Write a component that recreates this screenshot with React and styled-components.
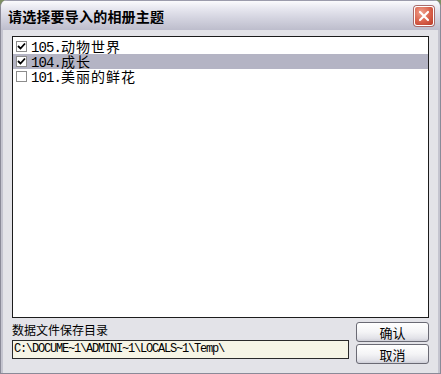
import React from "react";
import styled, { createGlobalStyle } from "styled-components";

const Global = createGlobalStyle`
  html, body { margin: 0; padding: 0; background: #7d8f63; }
  * { box-sizing: border-box; }
`;

const Window = styled.div`
  width: 441px;
  height: 374px;
  display: flex;
  flex-direction: column;
  background: #e3e3e8;
  border: 1px solid #8a8a98;
  border-top: none;
  border-radius: 7px 7px 0 0;
  overflow: hidden;
  font-family: "Noto Sans CJK SC", sans-serif;
`;

const TitleBar = styled.div`
  height: 30px;
  flex: none;
  display: flex;
  align-items: center;
  justify-content: space-between;
  padding: 0 6px 0 7px;
  background: linear-gradient(#fbfbfd 0%, #e8e8f0 25%, #d3d3df 60%, #bdbdcc 100%);
  border-top: 1px solid #9c9cac;
`;

const Title = styled.div`
  font-size: 14px;
  font-weight: 700;
  color: #000;
  letter-spacing: 0.2px;
`;

const Close = styled.div`
  width: 20px;
  height: 20px;
  border-radius: 3px;
  border: 1px solid #fff;
  background: radial-gradient(circle at 35% 30%, #f0a08c 0%, #d8604a 55%, #b83a28 100%);
  display: flex;
  align-items: center;
  justify-content: center;
  box-shadow: 0 0 0 1px #a86a6a;
`;

const Frame = styled.div`
  flex: 1;
  display: flex;
  flex-direction: column;
  padding: 6px 9px 9px 9px;
  border-left: 2px solid #c4c4cf;
  border-right: 2px solid #c4c4cf;
  border-bottom: 3px solid #c4c4cf;
`;

const ListBox = styled.div`
  height: 282px;
  flex: none;
  background: #fff;
  border: 1px solid #1c1c1c;
  padding: 2px 0 0 0;
`;

const Row = styled.div`
  height: 15px;
  display: flex;
  align-items: center;
  padding-left: 3px;
  background: ${(p) => (p.$selected ? "#b4b4c4" : "transparent")};
`;

const Box = styled.div`
  width: 11px;
  height: 11px;
  border: 1px solid #8c8c8c;
  background: #fff;
  flex: none;
  display: flex;
  align-items: center;
  justify-content: center;
  margin-right: 4px;
`;

const ItemText = styled.div`
  height: 15px;
  line-height: 14px;
  white-space: nowrap;
  color: #000;
  display: flex;
  align-items: baseline;
`;

const Num = styled.span`
  font-family: "Liberation Mono", monospace;
  font-size: 14px;
  letter-spacing: -0.9px;
  line-height: 14px;
`;

const Name = styled.span`
  font-family: "Noto Sans CJK SC", sans-serif;
  font-size: 14px;
  letter-spacing: 1px;
  line-height: 14px;
`;

const Bottom = styled.div`
  flex: 1;
  display: grid;
  grid-template-columns: 1fr 73px;
  column-gap: 7px;
  padding-top: 4px;
`;

const Left = styled.div`
  display: flex;
  flex-direction: column;
`;

const Label = styled.div`
  font-size: 12px;
  line-height: 14px;
  height: 18px;
  color: #000;
  padding-top: 1px;
`;

const PathBox = styled.div`
  height: 19px;
  background: #f6f5e6;
  border: 1px solid #2a2a2a;
  font-family: "Liberation Mono", monospace;
  font-size: 12px;
  letter-spacing: -1.2px;
  line-height: 17px;
  padding-left: 1px;
  color: #000;
  white-space: nowrap;
  overflow: hidden;
`;

const Buttons = styled.div`
  display: flex;
  flex-direction: column;
  gap: 2px;
`;

const Button = styled.div`
  height: 20px;
  border: 1px solid #6a6a74;
  border-radius: 3px;
  background: linear-gradient(#ffffff 0%, #f4f4f6 50%, #e2e2e8 85%, #cfcfd8 100%);
  display: flex;
  align-items: center;
  justify-content: center;
  font-size: 13px;
  color: #000;
`;

const Check = () => (
  <svg width="9" height="9" viewBox="0 0 9 9">
    <path d="M1 4 L3.5 6.5 L8 1.5" fill="none" stroke="#000" strokeWidth="1.8" />
  </svg>
);

const items = [
  { num: "105.", name: "动物世界", checked: true },
  { num: "104.", name: "成长", checked: true, selected: true },
  { num: "101.", name: "美丽的鲜花", checked: false },
];

export default function App() {
  return (
    <>
      <Global />
      <Window>
        <TitleBar>
          <Title>请选择要导入的相册主题</Title>
          <Close>
            <svg width="12" height="12" viewBox="0 0 12 12">
              <path d="M2 2 L10 10 M10 2 L2 10" stroke="#fff" strokeWidth="2.2" strokeLinecap="round" />
            </svg>
          </Close>
        </TitleBar>
        <Frame>
          <ListBox>
            {items.map((it) => (
              <Row key={it.num} $selected={it.selected}>
                <Box>{it.checked && <Check />}</Box>
                <ItemText>
                  <Num>{it.num}</Num>
                  <Name>{it.name}</Name>
                </ItemText>
              </Row>
            ))}
          </ListBox>
          <Bottom>
            <Left>
              <Label>数据文件保存目录</Label>
              <PathBox>C:\DOCUME~1\ADMINI~1\LOCALS~1\Temp\</PathBox>
            </Left>
            <Buttons>
              <Button>确认</Button>
              <Button>取消</Button>
            </Buttons>
          </Bottom>
        </Frame>
      </Window>
    </>
  );
}
